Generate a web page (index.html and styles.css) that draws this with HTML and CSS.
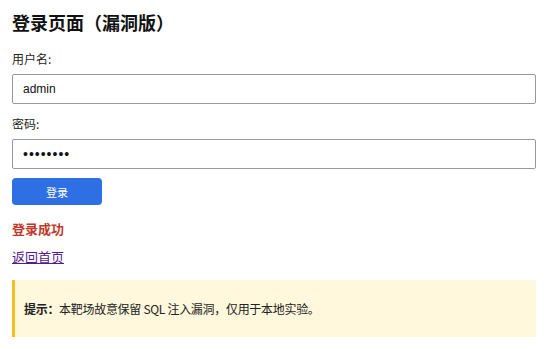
FILE: index.html
```html
<!DOCTYPE html>
<html lang="zh-CN">
<head>
    <meta charset="UTF-8">
    <meta name="viewport" content="width=device-width, initial-scale=1.0">
    <title>登录页面（漏洞版）</title>
    <link rel="stylesheet" href="styles.css">
</head>
<body>
    <div class="page">
        <h2>登录页面（漏洞版）</h2>
        <form class="login-form" onsubmit="return false;">
            <label class="field-label" for="username">用户名:</label>
            <input class="field-input" type="text" id="username" value="admin">
            <label class="field-label" for="password">密码:</label>
            <input class="field-input" type="password" id="password" value="12345678">
            <button class="btn-login" type="submit">登录</button>
        </form>
        <p class="msg-success">登录成功</p>
        <p class="back"><a href="#" class="back-link">返回首页</a></p>
        <div class="notice">
            <strong>提示：</strong>本靶场故意保留 SQL 注入漏洞，仅用于本地实验。
        </div>
    </div>
</body>
</html>
```

FILE: styles.css
```css
body { margin: 0; font-family: "Noto Sans CJK SC", "Noto Sans", sans-serif; color: #222; background: #fff; }
.page { width: 524px; padding: 9px 12px 0 12px; }
h2 { margin: 0; font-size: 18px; line-height: 26px; font-weight: bold; color: #111; }
.login-form { display: flex; flex-direction: column; align-items: flex-start; margin-top: 14px; }
.field-label { font-size: 12px; line-height: 19px; margin-bottom: 6px; }
.field-input { box-sizing: border-box; width: 524px; height: 30px; margin: 0 0 10px 0; padding: 0 10px; border: 1px solid #999; border-radius: 2px; font-family: "Liberation Sans", "Noto Sans CJK SC", sans-serif; font-size: 12px; color: #111; }
.field-input[type=password] { font-size: 14px; letter-spacing: 1px; }
.btn-login { margin-top: -1px; width: 90px; height: 27px; border: none; border-radius: 4px; background: #2e6fe3; color: #fff; font-family: inherit; font-size: 11px; }
.msg-success { margin: 15px 0 0 0; font-size: 13px; line-height: 18px; font-weight: bold; color: #c0392b; }
.back { margin: 10px 0 0 0; font-size: 13px; line-height: 18px; }
.back-link { color: #551a8b; }
.notice { margin-top: 14px; box-sizing: border-box; height: 57px; display: flex; align-items: center; padding-left: 9px; background: #fff8dc; border-left: 3px solid #f0c020; font-size: 12px; letter-spacing: -0.3px; color: #222; }
```
